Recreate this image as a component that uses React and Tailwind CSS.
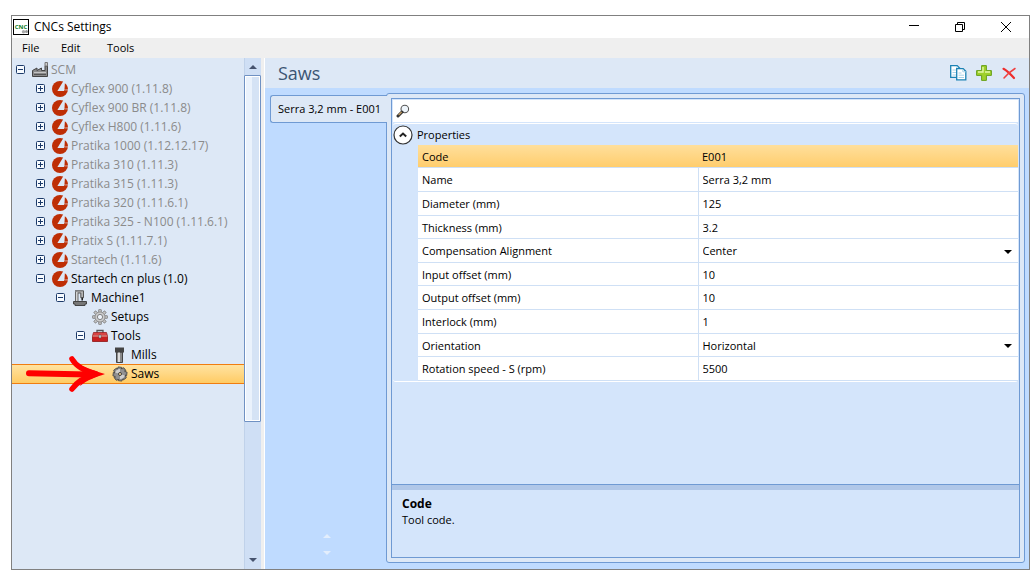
import { useState } from 'react'
import clsx from 'clsx'

const nodes = [
  { label: 'SCM', depth: 0, icon: 'factory', open: true, muted: true },
  { label: 'Cyflex 900 (1.11.8)', depth: 1, icon: 'brand', open: false, muted: true },
  { label: 'Cyflex 900 BR (1.11.8)', depth: 1, icon: 'brand', open: false, muted: true },
  { label: 'Cyflex H800 (1.11.6)', depth: 1, icon: 'brand', open: false, muted: true },
  { label: 'Pratika 1000 (1.12.12.17)', depth: 1, icon: 'brand', open: false, muted: true },
  { label: 'Pratika 310 (1.11.3)', depth: 1, icon: 'brand', open: false, muted: true },
  { label: 'Pratika 315 (1.11.3)', depth: 1, icon: 'brand', open: false, muted: true },
  { label: 'Pratika 320 (1.11.6.1)', depth: 1, icon: 'brand', open: false, muted: true },
  { label: 'Pratika 325 - N100 (1.11.6.1)', depth: 1, icon: 'brand', open: false, muted: true },
  { label: 'Pratix S (1.11.7.1)', depth: 1, icon: 'brand', open: false, muted: true },
  { label: 'Startech (1.11.6)', depth: 1, icon: 'brand', open: false, muted: true },
  { label: 'Startech cn plus (1.0)', depth: 1, icon: 'brand', open: true },
  { label: 'Machine1', depth: 2, icon: 'machine', open: true },
  { label: 'Setups', depth: 3, icon: 'gear' },
  { label: 'Tools', depth: 3, icon: 'toolbox', open: true },
  { label: 'Mills', depth: 4, icon: 'mill' },
  { label: 'Saws', depth: 4, icon: 'saw' },
]

const indent = ['pl-1', 'pl-6', 'pl-11', 'pl-16', 'pl-[84px]']

const properties = [
  { id: 'code', label: 'Code', value: 'E001' },
  { id: 'name', label: 'Name', value: 'Serra 3,2 mm' },
  { id: 'diameter', label: 'Diameter (mm)', value: '125' },
  { id: 'thickness', label: 'Thickness (mm)', value: '3.2' },
  { id: 'alignment', label: 'Compensation Alignment', value: 'Center', options: ['Center', 'Left', 'Right'] },
  { id: 'input', label: 'Input offset (mm)', value: '10' },
  { id: 'output', label: 'Output offset (mm)', value: '10' },
  { id: 'interlock', label: 'Interlock (mm)', value: '1' },
  { id: 'orientation', label: 'Orientation', value: 'Horizontal', options: ['Horizontal', 'Vertical'] },
  { id: 'speed', label: 'Rotation speed - S (rpm)', value: '5500' },
]

const teeth = [0, 45, 90, 135, 180, 225, 270, 315]

function NodeIcon({ name }) {
  return (
    <svg viewBox="0 0 16 16" className="size-4 shrink-0" aria-hidden="true">
      {name === 'factory' && (
        <>
          <path d="M.5 14.5V8.5L5 6v2.5L9.5 6v2.5h3.5V4h2.5v10.5z" fill="#8a8a8a" stroke="#444" />
          <path d="M13 .5h2.5v3.5H13z" fill="#ccc" stroke="#777" />
          <path d="M2 10.5h12" stroke="#c4c4c4" />
          <path d="M2 12.5h12" stroke="#555" />
        </>
      )}
      {name === 'brand' && (
        <>
          <circle cx="8" cy="8" r="8" fill="#be2e05" />
          <path d="M11.4 0 5.4 10H12V9.2h4V0z" fill="#dde8f6" />
          <path d="M12.9 2.2A8 8 0 0 1 16 8.6l-3.6.2z" fill="#be2e05" />
          <path d="M11.3 3.4v5.2L8 9z" fill="#dde8f6" />
        </>
      )}
      {name === 'machine' && (
        <>
          <path d="M3.5 12V1.5H6V12z" fill="#d5d5d5" stroke="#666" />
          <path d="M3 .8h8.5v7H8.8V3H6" fill="#b4b4b4" stroke="#555" />
          <path d="M10.2 7.5v3" stroke="#222" strokeWidth="1.6" />
          <path d="M1.5 11.5h13V14h-1.5v1.5H3V14H1.5z" fill="#777" stroke="#444" />
        </>
      )}
      {name === 'gear' && (
        <>
          {teeth.map(a => <rect key={a} x="6.7" y=".4" width="2.6" height="4" rx=".6" fill="#c4c4c4" stroke="#777" strokeWidth=".8" transform={`rotate(${a} 8 8)`} />)}
          <circle cx="8" cy="8" r="5" fill="#ccc" stroke="#888" strokeWidth=".8" />
          <circle cx="8" cy="8" r="2.6" fill="#eef3fa" stroke="#777" strokeWidth=".9" />
        </>
      )}
      {name === 'toolbox' && (
        <>
          <path d="M5 5V2.5h6V5" fill="none" stroke="#555" strokeWidth="1.3" />
          <path d="M1.5 4.5h13l1 3.5H.5z" fill="#d94444" stroke="#962222" strokeWidth=".8" />
          <path d="M.5 8h15v5.5H.5z" fill="#c82020" stroke="#8e1515" strokeWidth=".8" />
          <path d="M.5 8h15" stroke="#f3b0a8" />
          <path d="M7 7h2v3H7z" fill="#eee" stroke="#555" strokeWidth=".6" />
        </>
      )}
      {name === 'mill' && (
        <>
          <path d="M4.5 5h6v10.5h-6z" fill="#8a8a8a" stroke="#444" />
          <path d="M7 5v10" stroke="#ddd" strokeWidth="2" />
          <path d="M3 .5h9v5H3z" fill="#444" />
        </>
      )}
      {name === 'saw' && (
        <>
          {teeth.map(a => <path key={a} d="M5 4 6.2.9 9.8 1.4 9 4z" fill="#8a8a8a" stroke="#3f3f3f" strokeWidth=".8" transform={`rotate(${a} 8 8)`} />)}
          <circle cx="8" cy="8" r="5.2" fill="#929292" />
          <path d="M3.2 6.5A5 5 0 0 1 8 3V8zM12.8 9.5A5 5 0 0 1 8 13V8z" fill="#cfcfcf" />
          <circle cx="8" cy="8" r="1.5" fill="#ffe0a0" stroke="#333" strokeWidth=".9" />
        </>
      )}
    </svg>
  )
}

function Expander({ open, label }) {
  return (
    <button aria-label={label} aria-expanded={open} className="size-[9px] shrink-0">
      <svg viewBox="0 0 9 9" className="size-[9px]">
        <rect x=".5" y=".5" width="8" height="8" rx="1" fill="#f7fbff" stroke="#1c3a69" />
        <path d={open ? 'M2 4.5h5' : 'M2 4.5h5M4.5 2v5'} stroke="#1c3a69" />
      </svg>
    </button>
  )
}

// hand-drawn pointer lying over the selected row
function Pointer() {
  return (
    <svg viewBox="0 0 82 38" className="pointer-events-none absolute -top-2.5 left-3 h-[38px] w-[82px]" aria-hidden="true">
      <path d="M5 18.3 64 19.5" stroke="#f00" strokeWidth="6" strokeLinecap="round" />
      <path d="M48 4C52 11 60 16 72 19C61 22 53 27 48 34" fill="none" stroke="#f00" strokeWidth="5.5" strokeLinecap="round" strokeLinejoin="round" />
      <path d="M55 9C64 14 72 16 81 19C72 22 63 25 56 31L60 19z" fill="#f00" />
    </svg>
  )
}

function Tree() {
  const [selected, setSelected] = useState('Saws')
  return (
    <ul className="min-w-0 flex-1 pt-0.5">
      {nodes.map(n => (
        <li
          key={n.label}
          className={clsx(
            'relative flex items-center',
            indent[n.depth],
            n.label === selected ? '-mb-px h-5 border-y border-[#f07d10] bg-linear-to-b from-[#ffe3a0] to-[#ffcb63]' : 'h-[19px]',
          )}
        >
          {n.open === undefined ? <span className="w-[9px] shrink-0" /> : <Expander open={n.open} label={`Toggle ${n.label}`} />}
          <button
            onClick={() => setSelected(n.label)}
            className={clsx('ml-[7px] flex items-center gap-[3px] whitespace-nowrap', n.muted ? 'text-[#8b8b8b]' : 'text-black')}
          >
            <NodeIcon name={n.icon} />
            {n.label}
          </button>
          {n.label === 'Saws' && <Pointer />}
        </li>
      ))}
    </ul>
  )
}

function ScrollBar() {
  return (
    <div className="flex w-[17px] shrink-0 flex-col border-l border-[#c0d2ea] bg-[#cfdff5]">
      <button aria-label="Scroll up" className="flex h-[17px] items-center justify-center">
        <svg viewBox="0 0 8 4" className="h-1 w-2"><path d="M0 4 4 0l4 4z" fill="#46536e" /></svg>
      </button>
      <div className="-ml-px h-[347px] rounded-[1px] border border-[#6f91c3] bg-linear-to-r from-[#eaf2fc] from-45% to-[#d5e3f5] to-50% ring-1 ring-white ring-inset" />
      <div className="flex-1" />
      <button aria-label="Scroll down" className="flex h-[18px] items-center justify-center">
        <svg viewBox="0 0 8 4" className="h-1 w-2"><path d="M0 0h8L4 4z" fill="#46536e" /></svg>
      </button>
    </div>
  )
}

function TitleBar() {
  return (
    <header className="flex h-[22px] shrink-0 items-center bg-white pl-px">
      <svg viewBox="0 0 16 16" className="size-4" aria-hidden="true">
        <rect x=".5" y=".5" width="15" height="15" fill="#fff" stroke="#000" />
        <text x="8" y="10" textAnchor="middle" fontSize="6" fontWeight="700" fill="#0b7a1c">CNC</text>
        <circle cx="10.5" cy="12.8" r="1.7" fill="#aaa" />
        <circle cx="13.5" cy="12.5" r="1.5" fill="#999" />
      </svg>
      <h1 className="ml-[5px] flex-1 text-xs">CNCs Settings</h1>
      <button aria-label="Minimize" className="flex h-full w-[46px] items-center justify-center">
        <svg viewBox="0 0 10 10" className="size-2.5"><path d="M0 3.5h10" stroke="#000" /></svg>
      </button>
      <button aria-label="Restore" className="flex h-full w-[46px] items-center justify-center">
        <svg viewBox="0 0 10 10" className="size-2.5"><path d="M.5 2.5h7v7h-7zM2.5 2.5v-2h7v7h-2" fill="none" stroke="#000" /></svg>
      </button>
      <button aria-label="Close" className="flex h-full w-[46px] items-center justify-center">
        <svg viewBox="0 0 10 10" className="size-2.5"><path d="m0 0 10 10M10 0 0 10" stroke="#000" /></svg>
      </button>
    </header>
  )
}

function Actions() {
  return (
    <div className="flex items-center gap-[9px]">
      <button aria-label="Duplicate">
        <svg viewBox="0 0 17 16" className="h-4 w-[17px]">
          <path d="M.7.7h6.5l2.6 2.6v9H.7z" fill="#fff" stroke="#1c82b4" strokeWidth="1.3" />
          <path d="M6.8 1v2.8h3M2.5 5h5M2.5 7.5h5M2.5 10h5" fill="none" stroke="#a9d3e8" />
          <path d="M6.7 3.7h6.5l2.6 2.6v8.5H6.7z" fill="#fff" stroke="#1c82b4" strokeWidth="1.3" />
          <path d="M12.8 4v2.8h3M8.5 8h3M8.5 10.2h5.5M8.5 12.5h5.5" fill="none" stroke="#a9d3e8" />
        </svg>
      </button>
      <button aria-label="Add">
        <svg viewBox="0 0 16 16" className="size-4">
          <path d="M5.6.6h4.8v5h5v4.8h-5v5H5.6v-5h-5V5.6h5z" fill="#9fd02a" stroke="#68a01c" />
          <path d="M7 2v5H2M9 7h5" fill="none" stroke="#e4f7a8" strokeWidth="1.4" />
        </svg>
      </button>
      <button aria-label="Delete">
        <svg viewBox="0 0 16 16" className="size-4">
          <path d="M2.5 3.8q4 2.2 10.5 9.2" stroke="#ee2d2d" strokeWidth="2.2" strokeLinecap="round" fill="none" />
          <path d="M14 3.5Q7 8 3 13" stroke="#f04040" strokeWidth="1.5" strokeLinecap="round" fill="none" />
        </svg>
      </button>
    </div>
  )
}

function PropertyTable() {
  return (
    <table className="h-[236px] w-full table-fixed border-collapse bg-white">
      <tbody>
        {properties.map((p, i) => (
          <tr key={p.id} className={clsx('border-b border-[#cfe0f5]', i === 0 && 'bg-linear-to-b from-[#ffdf9b] to-[#ffcd6c]')}>
            <th scope="row" className={clsx('w-[280px] p-0 pt-0.5 pl-1 text-left font-normal', i > 0 && 'border-r border-[#cfe0f5]')}>
              <label htmlFor={p.id} className="block">{p.label}</label>
            </th>
            <td className="p-0 pt-0.5 pl-1">
              {p.options ? (
                <div className="relative flex items-center">
                  <select id={p.id} defaultValue={p.value} className="w-full appearance-none bg-transparent outline-none">
                    {p.options.map(o => <option key={o}>{o}</option>)}
                  </select>
                  <svg viewBox="0 0 8 4" className="pointer-events-none absolute right-1.5 h-1 w-2"><path d="M0 0h8L4 4z" /></svg>
                </div>
              ) : (
                <input id={p.id} defaultValue={p.value} className="block w-full bg-transparent outline-none" />
              )}
            </td>
          </tr>
        ))}
      </tbody>
    </table>
  )
}

function PropertyPanel() {
  return (
    <section className="flex min-w-0 flex-1 flex-col rounded-[3px] border border-[#6f9ad3] bg-[#dde8f6] p-1">
      <div className="flex flex-1 flex-col border border-[#6f9ad3] bg-[#d4e5fb]">
        <div className="m-px flex h-[22px] items-center gap-1 bg-white pl-[3px]">
          <svg viewBox="0 0 14 14" className="size-3.5" aria-hidden="true">
            <circle cx="8.8" cy="5" r="3.8" fill="#eef5fb" stroke="#555" strokeWidth="1.1" />
            <path d="M6 8 2 12" stroke="#333" strokeWidth="3" strokeLinecap="round" />
            <path d="M5.6 8 2.6 11" stroke="#c9a063" strokeWidth="1.2" />
          </svg>
          <input aria-label="Search properties" className="min-w-0 flex-1 outline-none" />
        </div>
        <div className="mx-px rounded-[3px] border-t border-b border-white">
          <div className="flex h-[21px] items-center gap-1">
            <button aria-label="Collapse Properties" className="relative z-10 -my-1">
              <svg viewBox="0 0 20 20" className="size-5">
                <circle cx="10" cy="10" r="9" fill="#fff" stroke="#333" strokeWidth="1.2" />
                <path d="m6.8 11.5 3.2-3 3.2 3" fill="none" stroke="#222" strokeWidth="2" />
              </svg>
            </button>
            <h3 className="pt-0.5">Properties</h3>
          </div>
          <div className="pl-[25px]">
            <PropertyTable />
          </div>
        </div>
        <div className="flex-1" />
        <div className="h-1.5 border-t border-[#6f9ad3] bg-[#b0c7e8]" />
        <div className="h-[67px] px-2.5 pt-1.5 leading-4">
          <h4 className="text-xs leading-4 font-bold">Code</h4>
          <p>Tool code.</p>
        </div>
      </div>
    </section>
  )
}

export default function App() {
  return (
    <div className="flex h-screen flex-col bg-white pt-[15px] pr-1.5 pb-[9px] pl-[11px] font-['Open_Sans','Noto_Sans',sans-serif] text-xs text-black">
      <div className="flex min-h-0 flex-1 flex-col border border-[#808080] bg-[#efefef]">
        <TitleBar />
        <nav className="flex h-5 shrink-0 items-center pl-2.5 text-[11px]">
          <button className="w-[39px] text-left">File</button>
          <button className="w-[46px] text-left">Edit</button>
          <button>Tools</button>
        </nav>
        <div className="flex min-h-0 flex-1 gap-[3px]">
          <aside className="flex w-[249px] shrink-0 bg-[#dde8f6]">
            <Tree />
            <ScrollBar />
          </aside>
          <main className="flex min-w-0 flex-1 flex-col border-l border-white bg-[#bfdbff]">
            <div className="flex h-[30px] shrink-0 items-center justify-between bg-[#dde8f6] pr-3 pl-[13px]">
              <h2 className="text-lg leading-6 text-[#3b5573]">Saws</h2>
              <Actions />
            </div>
            <div className="flex min-h-0 flex-1 pt-[5px] pr-1 pb-1.5 pl-[5px] text-[11px]">
              <div role="tablist" className="relative z-10 -mr-px flex w-[117px] shrink-0 flex-col pt-0.5">
                <button role="tab" aria-selected="true" className="h-7 rounded-l-[3px] border border-r-0 border-[#6f9ad3] bg-[#dde8f6] pl-[7px] text-left whitespace-nowrap">
                  Serra 3,2 mm - E001
                </button>
                <div className="mt-auto flex flex-col items-center gap-[13px] pr-1 pb-2">
                  <button aria-label="Previous tab" className="flex"><svg viewBox="0 0 8 4" className="h-1 w-2"><path d="M0 4 4 0l4 4z" fill="#e3eefc" /></svg></button>
                  <button aria-label="Next tab" className="flex"><svg viewBox="0 0 8 4" className="h-1 w-2"><path d="M0 0h8L4 4z" fill="#e3eefc" /></svg></button>
                </div>
              </div>
              <PropertyPanel />
            </div>
          </main>
        </div>
      </div>
    </div>
  )
}
